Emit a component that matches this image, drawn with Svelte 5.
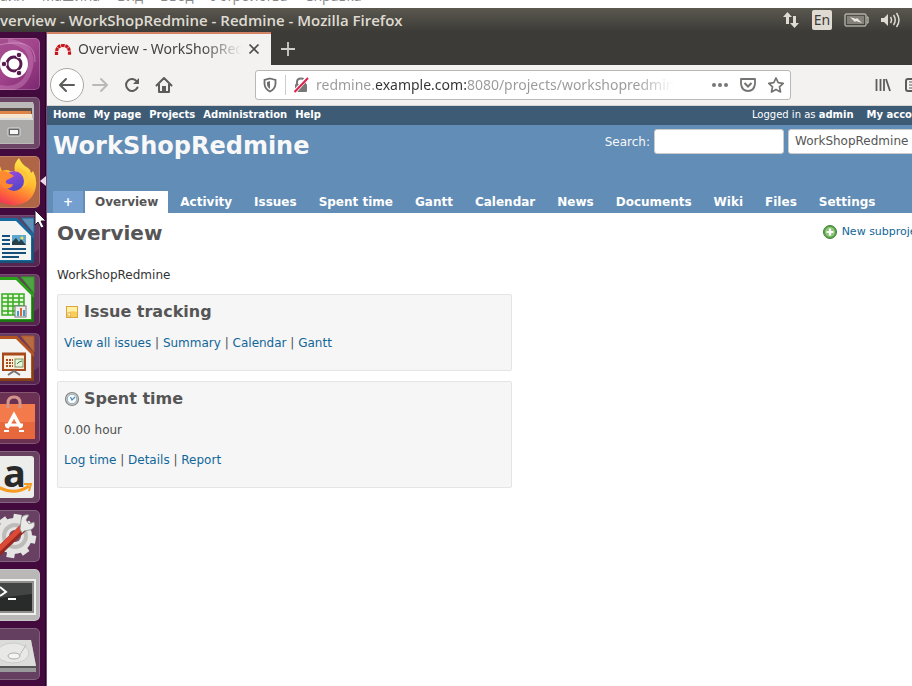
<script>
  const hostMenu = ['айл', 'Машина', 'Вид', 'Ввод', 'Устройства', 'Справка'];
  const topLinks = ['Home', 'My page', 'Projects', 'Administration', 'Help'];
  const tabs = ['Overview', 'Activity', 'Issues', 'Spent time', 'Gantt', 'Calendar', 'News', 'Documents', 'Wiki', 'Files', 'Settings'];
  const issueLinks = ['View all issues', 'Summary', 'Calendar', 'Gantt'];
  const timeLinks = ['Log time', 'Details', 'Report'];
  let url = $state('redmine.example.com:8080/projects/workshopredmine');
  let query = $state('');
</script>

{#snippet linkRow(items)}
  <p>{#each items as item, i}{#if i}{' | '}{/if}<a href="#{item}">{item}</a>{/each}</p>
{/snippet}

{#snippet office(dark, mid, light)}
  <rect x="-12" width="52" height="52" rx="5" fill="#562650" />
  <path d="M-12 1H39V34Q20 50-12 30Z" fill="#8a6387" opacity=".35" />
  <path d="M-12 3H17L34 20V48H-12Z" fill={mid} />
  <path d="M-12 46H32V22L34 24V48H-12Z" fill={dark} opacity=".6" />
  <path d="M-12 6H16L31 21V45H-12Z" fill="#f4f4f3" />
  <path d="M21 3H34V19Z" fill={light} /><path d="M21 3H34V19Z" fill="none" stroke={mid} stroke-width="1" />
{/snippet}

<div class="desktop">
  <nav class="host" aria-label="Virtual machine">
    {#each hostMenu as item}<span>{item}</span>{/each}
  </nav>
  <header class="panel">
    <strong>verview - WorkShopRedmine - Redmine - Mozilla Firefox</strong>
    <div class="indicators">
      <svg width="18" height="18" viewBox="0 0 18 18"><path d="M5.500 1L10 6H7v7H4V6H1ZM12.500 17L8 12h3V5h3v7h3Z" fill="#dfdbd2" /></svg>
      <span class="lang">En</span>
      <svg width="25" height="14" viewBox="0 0 25 14"><rect x="1" y="1" width="21" height="12" rx="1" fill="none" stroke="#dfdbd2" /><path d="M3 3H20V11H3Z" fill="#85827b" /><path d="M23 4h1v6h-1" fill="none" stroke="#dfdbd2" /><path d="M6 4l6 2 1-1 5 5-6-2-1 1Z" fill="#efebe2" /></svg>
      <svg width="20" height="16" viewBox="0 0 20 16"><path d="M0 6H3L7 2V14L3 10H0Z" fill="#dfdbd2" /><path d="M9.500 5Q11.500 8 9.500 11M12.500 3Q16 8 12.500 13M15.500 1Q20.500 8 15.500 15" fill="none" stroke="#dfdbd2" stroke-width="1.500" /></svg>
    </div>
  </header>
  <div class="workspace">
    <nav class="launcher" aria-label="Launcher">
      <button aria-label="Dash"><svg viewBox="0 0 40 52">
        <defs><linearGradient id="dash" x1="0" x2="1" y1="0" y2="1"><stop stop-color="#a5528e" /><stop offset=".5" stop-color="#a2458c" /><stop offset="1" stop-color="#7b2770" /></linearGradient></defs>
        <rect x="-12" width="52" height="52" rx="5" fill="url(#dash)" />
        <path d="M8 3Q36 7 30 31T-3 49" fill="none" stroke="#d58bc4" stroke-width="5" opacity=".4" /><path d="M-5 8Q36-3 35 24" fill="none" stroke="#e6b4dc" opacity=".5" />
        <circle cx="14" cy="26" r="14" fill="#fff" /><circle cx="14" cy="26" r="7" fill="none" stroke="#5a1c50" stroke-width="3" />
        <g fill="#5a1c50" stroke="#fff"><circle cx="4" cy="26" r="2.800" /><circle cx="19" cy="17" r="2.800" /><circle cx="19" cy="35" r="2.800" /></g>
      </svg></button>
      <button aria-label="Files"><svg viewBox="0 0 40 52">
        <rect x="-12" width="52" height="52" rx="5" fill="#6b4466" /><path d="M-12 5H33L34 8V47H-12Z" fill="#bcbab8" /><path d="M-12 11H32V22H-12Z" fill="#5b5049" /><path d="M-12 14H31V18H-12Z" fill="#df8347" /><path d="M-12 17H32V21H-12Z" fill="#f5e5cf" />
        <path d="M-12 21H34V46H-12Z" fill="#aaa9a8" /><path d="M-12 22H33" stroke="#ddd" stroke-width="2" /><rect x="8" y="31" width="12" height="8" rx="1" fill="#666" stroke="#ddd" stroke-width="1" /><rect x="10" y="33" width="8" height="4" fill="#f7f7f7" />
      </svg></button>
      <button aria-label="Firefox"><svg viewBox="0 0 40 52">
        <defs><linearGradient id="fire" x1=".8" x2=".3" y1="0" y2="1"><stop stop-color="#fff14f" /><stop offset=".45" stop-color="#ffb62e" /><stop offset=".75" stop-color="#ff6a38" /><stop offset="1" stop-color="#f02f5c" /></linearGradient><linearGradient id="globe" x2=".5" y2="1"><stop stop-color="#a44be0" /><stop offset="1" stop-color="#5546c8" /></linearGradient></defs>
        <rect x="-12" width="52" height="52" rx="5" fill="#ae6647" />
        <path d="M15 15Q13 8 19 2Q22 9 28 12Q31 14 31 17L33 15Q37 22 36 30Q34 44 21 48Q5 52-7 41L-12 22Q-6 12 0 10L2 15Q7 13 10 15Z" fill="url(#fire)" />
        <circle cx="14" cy="25" r="10" fill="url(#globe)" />
        <path d="M-8 18Q3 12 11 18L14 20L9 23Q5 24 6 27Q9 29 13 28Q12 33 6 32Q2 31 1 26L-2 34L-12 30Z" fill="#ff8a30" />
        <path d="M14 15Q22 15 24 21Q26 27 22 32Q30 28 28 20Q26 14 18 12Z" fill="#ffc43a" />
      </svg></button>
      <button aria-label="Writer"><svg viewBox="0 0 40 52">{@render office('#1c4162', '#176a9c', '#5e91b5')}
        <path d="M2 21H10M2 25H10M2 29H10M2 34H26M2 38H26M2 42H19" stroke="#164f79" stroke-width="2" /><rect x="12" y="20" width="14" height="10" fill="#5ba7ce" /><path d="M12 30V27L16 23L19 27L21 24L26 30Z" fill="#263e45" /><circle cx="22" cy="23" r="1.500" fill="#ffda54" />
      </svg></button>
      <button aria-label="Calc"><svg viewBox="0 0 40 52">{@render office('#195614', '#2aa118', '#50a446')}
        <path d="M2 20H24V41H2Z" fill="#e6f8d9" /><path d="M2 20H24V41H2ZM2 24H24M2 28H24M2 32H24M2 37H24M8 20V41M13 20V41M19 20V41" fill="none" stroke="#39aa23" stroke-width="1.500" /><rect x="15" y="32" width="11" height="11" fill="#eee" stroke="#777" /><path d="M17 37h2v5h-2zM23 36h2v6h-2z" fill="#3d9dd0" /><path d="M20 34h2v8h-2z" fill="#e4642c" />
      </svg></button>
      <button aria-label="Impress"><svg viewBox="0 0 40 52">{@render office('#653016', '#b35523', '#b66c43')}
        <rect x="3" y="21" width="22" height="16" fill="#fff1db" stroke="#a74b1e" stroke-width="2" /><path d="M2 21H26" stroke="#a74b1e" stroke-width="3" /><path d="M6 27H13M6 30H13M6 33H13" stroke="#a74b1e" stroke-width="2" stroke-dasharray="2 1" /><rect x="15" y="26" width="8" height="8" fill="#e8f4dc" stroke="#77905e" /><path d="M17 31L19 29L22 28" fill="none" stroke="#2b8d35" /><path d="M8 42L14 38L20 42" fill="none" stroke="#777" stroke-width="2" />
      </svg></button>
      <button aria-label="Software"><svg viewBox="0 0 40 52">
        <rect x="-12" width="52" height="52" rx="5" fill="#6a3152" /><path d="M-12 12H35V47H-12Z" fill="#e7683c" /><path d="M-12 12H35V30H-12Z" fill="#f37b4b" /><path d="M8 16V11Q8 5 14 5T20 11V16" fill="none" stroke="#d3958c" stroke-width="3" /><path d="M7 36L14 23L21 36" fill="none" stroke="#fff" stroke-width="3.500" /><path d="M5 33H23" stroke="#fff" stroke-width="3" /><path d="M4 39h5M19 39h5" stroke="#fff" stroke-width="2" />
      </svg></button>
      <button aria-label="Amazon"><svg viewBox="0 0 40 52">
        <rect x="-12" width="52" height="52" rx="5" fill="#684160" /><rect x="-12" y="5" width="46" height="42" rx="3" fill="#ededec" /><path d="M-2 36Q14 45 29 35" fill="none" stroke="#f79a21" stroke-width="3" /><path d="M24 33H31L29 40" fill="none" stroke="#f79a21" stroke-width="2" />
      </svg><b>a</b></button>
      <button aria-label="System Settings"><svg viewBox="0 0 40 52">
        <rect x="-12" width="52" height="52" rx="5" fill="#674062" /><g transform="translate(14 26) rotate(10)" fill="#e4e4e3"><circle r="18" /><g stroke="#e4e4e3" stroke-width="8"><path d="M0-22V22M-22 0H22M-15-15L15 15M15-15L-15 15" /></g></g><circle cx="15" cy="26" r="11" fill="none" stroke="#bdbcbb" stroke-width="4" /><circle cx="15" cy="26" r="6" fill="#77506f" />
        <path d="M23 18L-3 43" stroke="#96281f" stroke-width="8" /><path d="M22 17L-4 42" stroke="#dd4937" stroke-width="5" />
        <path d="M20 19L21 10Q22 4 29 5L26 10L29 14L34 12Q36 18 30 20L24 21L22 23Z" fill="#e9e9e8" stroke="#8d8b8a" stroke-width=".8" />
      </svg></button>
      <button aria-label="Terminal"><svg viewBox="0 0 40 52">
        <rect x="-12" width="52" height="52" rx="5" fill="#b9b8b7" /><rect x="-12" y="10" width="48" height="36" fill="#efefef" /><rect x="-12" y="12" width="46" height="32" fill="#91908f" /><rect x="-12" y="14" width="44" height="28" fill="#292b2b" /><path d="M-12 14H32V25L-12 30Z" fill="#555" opacity=".6" /><path d="M0 18L6 23L0 27M8 30H16" fill="none" stroke="#fff" stroke-width="2" />
      </svg></button>
      <button aria-label="Disk"><svg viewBox="0 0 40 52">
        <rect x="-12" width="52" height="52" rx="5" fill="#653f60" /><path d="M-12 12H31L36 38V44H-12Z" fill="#999" /><path d="M-12 12H31L36 38H-12Z" fill="#dcdcdb" /><path d="M-12 39H36" stroke="#555" stroke-width="2" /><ellipse cx="13" cy="25" rx="16" ry="10" fill="#e8e8e7" stroke="#ccc" /><ellipse cx="14" cy="28" rx="6" ry="3" fill="#f5f5f5" stroke="#aaa" /><path d="M26 17L19 28" stroke="#bbb" />
      </svg></button>
      <svg class="running" viewBox="0 0 6 10" aria-hidden="true"><path d="M6 0V10L0 5Z" fill="#ead7e7" /></svg>
      <svg class="pointer" viewBox="0 0 13 20" aria-hidden="true"><path d="M1 1V16L4 13L7 19L10 18L7 12H12Z" fill="#fff" stroke="#29112a" /></svg>
    </nav>

    <div class="window">
      <div class="tabbar">
        <div class="browser-tab">
          <svg width="18" height="14" viewBox="0 0 18 14"><path d="M2.500 13V10Q3 3.500 9 3.500T15.500 10V13" fill="none" stroke="#c4161c" stroke-width="3.200" stroke-dasharray="3.200 .6" /></svg>
          <span class="tab-title">Overview - WorkShopRedmine</span>
          <button aria-label="Close tab"><svg width="12" height="12" viewBox="0 0 12 12"><path d="M1.500 1.500L10.500 10.500M10.500 1.500L1.500 10.500" stroke="#4c4c4a" stroke-width="1.700" /></svg></button>
        </div>
        <button class="new-tab" aria-label="New tab"><svg width="16" height="16" viewBox="0 0 16 16"><path d="M8 1V15M1 8H15" stroke="#d0cfcb" stroke-width="1.800" /></svg></button>
      </div>
      <div class="toolbar">
        <button class="back" aria-label="Back"><svg width="18" height="18" viewBox="0 0 18 18"><path d="M16 9H2.500M8 3L2 9L8 15" fill="none" stroke="#5c5c5a" stroke-width="2" stroke-linecap="round" stroke-linejoin="round" /></svg></button>
        <button aria-label="Forward"><svg width="18" height="18" viewBox="0 0 18 18"><path d="M2 9H15.500M10 3L16 9L10 15" fill="none" stroke="#bbb9b7" stroke-width="2" stroke-linecap="round" stroke-linejoin="round" /></svg></button>
        <button aria-label="Reload"><svg width="18" height="18" viewBox="0 0 18 18"><path d="M14 5.500A6 6 0 1 0 14.500 11.500" fill="none" stroke="#5c5c5a" stroke-width="2" stroke-linecap="round" /><path d="M16 2V8H10Z" fill="#5c5c5a" /></svg></button>
        <button aria-label="Home"><svg width="18" height="18" viewBox="0 0 18 18"><path d="M1.500 9.500L9 2L16.500 9.500M4 8V16H14V8" fill="none" stroke="#5c5c5a" stroke-width="2" stroke-linecap="round" stroke-linejoin="round" /><path d="M7 16V10H11V16Z" fill="#5c5c5a" /></svg></button>
        <div class="address">
          <svg width="16" height="16" viewBox="0 0 16 16"><path d="M8 1.500L13.500 3V7Q13 12 8 14.500Q3 12 2.500 7V3Z" fill="none" stroke="#6d6d6b" stroke-width="1.800" /><path d="M8 4L5 5V8Q5.500 10.500 8 12Z" fill="#6d6d6b" /></svg>
          <i></i>
          <svg width="16" height="16" viewBox="0 0 16 16"><path d="M4 8V5Q4 1.500 8 1.500T12 5V8" fill="none" stroke="#777" stroke-width="2" /><rect x="2" y="7" width="12" height="8" rx="1" fill="#777" /><path d="M14.500 .5L1.500 15" stroke="#fff" stroke-width="4" /><path d="M15 1L1.500 15" stroke="#dc234c" stroke-width="2" /></svg>
          <input aria-label="Address" bind:value={url} />
          <button aria-label="Page actions"><svg width="18" height="6" viewBox="0 0 18 6"><g fill="#777"><circle cx="3" cy="3" r="2" /><circle cx="9" cy="3" r="2" /><circle cx="15" cy="3" r="2" /></g></svg></button>
          <button aria-label="Save to Pocket"><svg width="16" height="16" viewBox="0 0 16 16"><path d="M1 2H15V7Q14 14 8 14T1 7Z" fill="none" stroke="#737371" stroke-width="1.800" stroke-linejoin="round" /><path d="M4.500 6L8 9.500L11.500 6" fill="none" stroke="#737371" stroke-width="2" /></svg></button>
          <button aria-label="Bookmark"><svg width="16" height="16" viewBox="0 0 16 16"><path d="M8 1L10.200 5.700L15.200 6.300L11.500 9.800L12.500 15L8 12.400L3.500 15L4.500 9.800L.8 6.300L5.800 5.700Z" fill="none" stroke="#737371" stroke-width="1.700" stroke-linejoin="round" /></svg></button>
        </div>
        <div class="tools">
          <button aria-label="Library"><svg width="16" height="16" viewBox="0 0 16 16"><path d="M1.500 2V14M5.500 2V14M9 2V14M11 2L15 14" fill="none" stroke="#5c5c5a" stroke-width="1.800" /></svg></button>
          <button aria-label="Sidebar"><svg width="16" height="16" viewBox="0 0 16 16"><rect x="1" y="2" width="14" height="12" rx="2" fill="none" stroke="#5c5c5a" stroke-width="2" /><path d="M4 5H8M4 8H8M4 11H8" stroke="#5c5c5a" /></svg></button>
        </div>
      </div>

      <div class="topmenu">
        <nav>{#each topLinks as item}<a href="#{item}">{item}</a>{/each}</nav>
        <div class="account"><span>Logged in as <a href="#admin">admin</a></span><a href="#account">My account</a></div>
      </div>
      <header class="project">
        <div class="headline">
          <h1>WorkShopRedmine</h1>
          <form onsubmit={(e) => e.preventDefault()}>
            <label for="search">Search:</label>
            <input id="search" bind:value={query} />
            <select aria-label="Project"><option>WorkShopRedmine</option></select>
          </form>
        </div>
        <nav class="tabs"><a class="plus" href="#new">+</a>{#each tabs as item, i}<a class:selected={i === 0} href="#{item}">{item}</a>{/each}</nav>
      </header>
      <main>
        <div class="contextual"><svg width="14" height="14" viewBox="0 0 14 14"><circle cx="7" cy="7" r="6.500" fill="#58a248" stroke="#468238" /><circle cx="7" cy="7" r="5" fill="#8dc77c" /><path d="M7 3.500V10.500M3.500 7H10.500" stroke="#fff" stroke-width="2.200" /></svg><a href="#subproject">New subproject</a></div>
        <h2>Overview</h2>
        <p class="description">WorkShopRedmine</p>
        <section class="box">
          <h3><svg width="16" height="16" viewBox="0 0 16 16"><rect x="2.500" y="2.500" width="11" height="11" fill="#f8cd58" stroke="#dda542" /><path d="M3 3H13V8Q8 6 3 9Z" fill="#fff0a6" /><path d="M2.500 9H6.500V13.500Z" fill="#fff8d2" stroke="#dca747" stroke-width=".7" /></svg>Issue tracking</h3>
          {@render linkRow(issueLinks)}
        </section>
        <section class="box">
          <h3><svg width="16" height="16" viewBox="0 0 16 16"><circle cx="8" cy="8" r="6.500" fill="#d5d8d8" stroke="#858680" stroke-width="1.200" /><circle cx="8" cy="8" r="4.800" fill="#f9fcff" stroke="#8fa5b6" /><path d="M6.500 6L8 9L11 6" fill="none" stroke="#4b86b6" stroke-width="1.200" /></svg>Spent time</h3>
          <p>0.00 hour</p>
          {@render linkRow(timeLinks)}
        </section>
      </main>
    </div>
  </div>
</div>

<style>
  :global(body) { margin: 0; }
  .desktop { display: flex; flex-direction: column; min-height: 100vh; overflow: hidden; background: #fff; font: 12px/18px "DejaVu Sans", Verdana, sans-serif; color: #333; }
  button { display: flex; align-items: center; justify-content: center; padding: 0; border: 0; background: none; }
  svg { display: block; flex: none; }
  a { color: #169; text-decoration: none; }
  .host { display: flex; align-items: flex-end; gap: 17px; height: 8px; color: #888; font: 14px/20px "Open Sans", sans-serif; overflow: hidden; }
  .host span { flex: none; padding-bottom: 2px; }
  .panel { display: flex; align-items: center; justify-content: space-between; height: 24px; padding-right: 11px; background: linear-gradient(#5a584f, #3c3b37); color: #dfdbd2; font: 14px/24px "Noto Sans", sans-serif; white-space: nowrap; }
  .panel strong { font: 600 15px/24px "Open Sans", sans-serif; }
  .indicators { display: flex; align-items: center; gap: 12px; }
  .lang { width: 20px; border-radius: 2px; background: #dfdbd2; color: #3c3b37; font-size: 14px; line-height: 20px; text-align: center; }
  .workspace { display: flex; flex: 1; }
  .launcher { position: relative; display: flex; flex-direction: column; gap: 7px; flex: none; width: 46px; box-sizing: border-box; padding-top: 6px; border-right: 1px solid #2b0229; background: #430b3d; }
  .launcher button { position: relative; width: 40px; height: 52px; }
  .launcher button svg { width: 40px; height: 52px; border-radius: 0 5px 5px 0; }
  .launcher button::after { content: ""; position: absolute; inset: 0; border: 1px solid #ffffff30; border-left: 0; border-radius: 0 5px 5px 0; }
  .launcher b { position: absolute; left: 3px; top: 2px; color: #292929; font: bold 38px/38px "Open Sans", sans-serif; }
  .running { position: absolute; left: 40px; top: 144px; width: 6px; height: 10px; }
  .pointer { position: absolute; left: 34px; top: 177px; width: 13px; height: 20px; z-index: 1; }
  .window { flex: 1; min-width: 0; margin-right: -83px; border-left: 1px solid #764b75; }
  .tabbar { display: flex; height: 33px; background: #3c3b37; }
  .browser-tab { display: flex; align-items: center; gap: 6px; box-sizing: border-box; width: 224px; padding: 0 11px 2px 7px; border-top: 2px solid #d28464; background: #f4f2f1; color: #444; font: 14px/20px "Noto Sans", sans-serif; }
  .tab-title { flex: 1; min-width: 0; overflow: hidden; white-space: nowrap; mask-image: linear-gradient(90deg, #000 76%, transparent); }
  .new-tab { width: 34px; }
  .toolbar { display: flex; align-items: center; height: 41px; box-sizing: border-box; padding: 0 3px; background: #f4f2f1; border-bottom: 1px solid #d8d5d3; }
  .toolbar > button { width: 32px; height: 32px; }
  .toolbar > .back { width: 34px; height: 34px; box-sizing: border-box; border: 1px solid #aaa8a6; border-radius: 50%; background: #fff; }
  .address { display: flex; align-items: center; gap: 7px; box-sizing: border-box; width: 536px; height: 30px; margin-left: 75px; padding: 0 5px 0 6px; border: 1px solid #bab7b4; border-radius: 3px; background: #fff; }
  .address i { width: 1px; height: 20px; background: #ccc; }
  .address input { flex: 1; min-width: 0; margin-right: 28px; padding: 0; border: 0; outline: 0; font: 14px/20px "Noto Sans", sans-serif; color: transparent; background: linear-gradient(90deg, #999 60px, #333 60px 151px, #999 151px 90%, transparent); -webkit-background-clip: text; background-clip: text; }
  .address button { min-width: 18px; margin-left: 3px; }
  .tools { display: flex; gap: 14px; margin-left: 84px; }
  .topmenu { display: flex; justify-content: space-between; height: 19px; padding: 0 6px; background: #3e5b76; color: #fff; font-size: 10px; line-height: 17px; white-space: nowrap; }
  .topmenu nav { display: flex; gap: 8px; }
  .topmenu a { color: #fff; font-weight: bold; }
  .account { display: flex; gap: 13px; margin-right: 58px; }
  .project { height: 88px; box-sizing: border-box; display: flex; flex-direction: column; justify-content: space-between; padding: 4px 6px 0; background: #628db6; color: #f8f8f8; }
  .headline { display: flex; justify-content: space-between; align-items: flex-start; }
  h1 { margin: 0; font-size: 24px; line-height: 34px; }
  form { display: flex; align-items: center; gap: 4px; }
  form input, form select { box-sizing: border-box; height: 25px; border: 1px solid #ccc; border-radius: 3px; background: #fff; color: #555; font: 12px/16px "DejaVu Sans", sans-serif; }
  form input { width: 130px; }
  form select { width: 201px; appearance: none; padding: 0 6px 2px; }
  .tabs { display: flex; gap: 2px; }
  .tabs a { padding: 2px 10px; color: #fff; font-weight: bold; white-space: nowrap; }
  .tabs .plus { background: #759fcf; }
  .tabs .selected { background: #fff; color: #555; }
  main { padding: 6px 10px 10px; }
  .contextual { float: right; display: flex; align-items: center; gap: 5px; padding-right: 58px; padding-top: 5px; font-size: 11px; line-height: 16px; }
  h2 { margin: 0; color: #555; font-size: 20px; line-height: 28px; }
  .description { margin: 19px 0 10px; line-height: 18px; }
  .box { box-sizing: border-box; width: 49%; margin-bottom: 10px; padding: 7px 6px 6px; border: 1px solid #e4e4e4; background: #f6f6f6; border-radius: 2px; color: #505050; }
  h3 { display: flex; align-items: center; gap: 4px; margin: 0 0 12px; color: #555; font-size: 16px; line-height: 20px; }
  .box p { margin: 0 0 12px; }
</style>
